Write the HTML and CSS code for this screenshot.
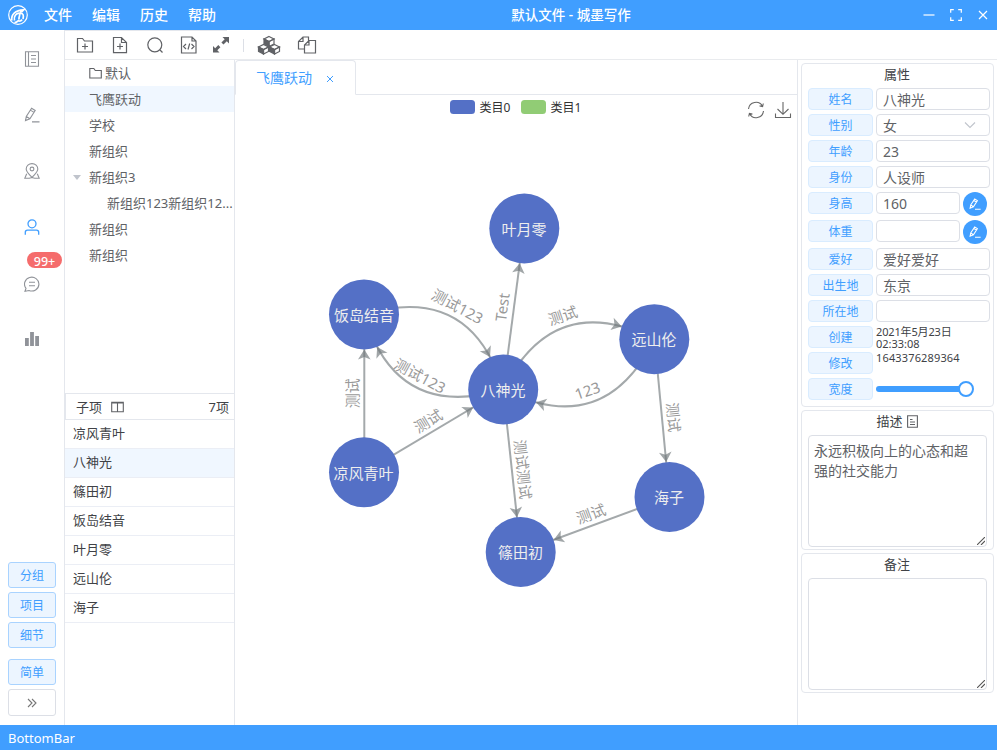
FILE: index.html
```html
<!DOCTYPE html>
<html lang="zh-CN">
<head>
<meta charset="utf-8">
<title>默认文件 - 城墨写作</title>
<link rel="stylesheet" href="styles.css">
</head>
<body>
<svg class="defs" width="0" height="0">
  <symbol id="pen" viewBox="0 0 16 16"><path d="M1.500 13.600 2.300 9.400 7.600 1.200 11.200 3.500 5.900 11.700ZM2.300 9.400l3.600 2.300M6.400 3.100l3.600 2.300M8 14.900h7.500"/></symbol>
  <symbol id="grip" viewBox="0 0 8 8"><path d="M0 8 8 0M4 8l4-4"/></symbol>
</svg>
<div class="app">
  <header class="titlebar">
    <svg class="logo" viewBox="0 0 20 20"><circle cx="10" cy="10" r="9.300"/><path class="wing" d="M3.800 15.500C3 9.500 7 5.300 15.800 4.800C14.500 6.500 13.500 7 12 7.200"/><path class="wing" d="M6.500 15.500C5.500 11 8 8.200 11.500 8.200C12.800 9.300 10.600 11 11 14.500M12 8.200C15.500 8.200 15.800 10.500 15 14M6.500 17.200C9 18 10 15 11 15.800S13.500 15.500 14 14.500"/></svg>
    <nav class="menu"><span>文件</span><span>编辑</span><span>历史</span><span>帮助</span></nav>
    <div class="title">默认文件 - 城墨写作</div>
    <div class="win">
      <svg viewBox="0 0 12 12"><path d="M.5 6h11"/></svg>
      <svg viewBox="0 0 12 12"><path d="M.7 3.800V.7h3.100M8.200.7h3.100v3.100M11.300 8.200v3.100H8.200M3.800 11.300H.7V8.200"/></svg>
      <svg viewBox="0 0 12 12"><path d="m2 2 8 8M10 2l-8 8"/></svg>
    </div>
  </header>

  <div class="body">
    <aside class="rail">
      <div class="rail-icons">
        <div class="rail-item"><svg viewBox="0 0 16 16"><path d="M1.500.8h13v14.400h-13zM4.500.8v14.400M7 4.500h5M7 8h5M7 11.500h5"/></svg></div>
        <div class="rail-item"><svg><use href="#pen"/></svg></div>
        <div class="rail-item"><svg viewBox="0 0 16 16"><path d="M8 14.500C5 11 2.200 9 2.200 6.100a5.800 5.500 0 0 1 11.600 0C13.800 9 11 11 8 14.500ZM2.700 10.700.8 15.300h4.500L8 14.500l2.700.8h4.500l-1.900-4.600"/><circle cx="8" cy="6" r="1.900"/></svg></div>
        <div class="rail-item active"><svg viewBox="0 0 16 16"><circle cx="8" cy="4.800" r="4"/><path d="M1.300 15.800v-2.500q0-2.200 2.200-2.200h9q2.200 0 2.200 2.200v2.500"/></svg></div>
        <div class="rail-item low"><svg viewBox="0 0 16 16"><path d="M1 15.200 2 12.300A7.200 6.900 0 1 1 5 14.500ZM5 6.200h6M5 9.800h6"/></svg><b class="badge">99+</b></div>
        <div class="rail-item"><svg class="solid" viewBox="0 0 16 16"><path d="M1 7h3.800v8H1zM6.100 1h3.800v14H6.100zM11.200 5H15v10h-3.800z"/></svg></div>
      </div>
      <div class="rail-buttons">
        <button>分组</button><button>项目</button><button>细节</button>
        <button class="gap">简单</button>
        <button class="plain"><svg viewBox="0 0 10 10"><path d="m1 1 4 4-4 4M5 1l4 4-4 4"/></svg></button>
      </div>
    </aside>

    <div class="main">
      <div class="toolbar">
        <svg viewBox="0 0 18 18"><path d="M1.500 2.500h5l2 2.500h8v11h-15zM9 7.500v6M6 10.500h6"/></svg>
        <svg viewBox="0 0 18 18"><path d="M2.500 1.500h8l5 5v10.200h-13zM10.500 1.500v5h5M9 7.500v6M6 10.500h6"/></svg>
        <svg viewBox="0 0 18 18"><circle cx="8.800" cy="8.800" r="7"/><path d="m14 14 2.500 2.500"/></svg>
        <svg class="code" viewBox="0 0 18 18"><path d="M1.500 1h10.500l4 4v12h-14.500zM12 1v4h4M6 8l-2.500 2.500L6 13M11.500 8l2.500 2.500L11.500 13M9.700 7.500 8 13.500"/></svg>
        <svg class="solid" viewBox="0 0 18 18"><path d="M10.500 1h6.500v6.500l-2.200-2.200-3.300 3.300-2.100-2.100 3.300-3.300zM1 16.500V10l2.200 2.200 3.100-3.100 2.100 2.100-3.100 3.100 2.200 2.200z"/></svg>
        <i class="sep"></i>
        <svg class="cubes" viewBox="0 0 24 20"><path class="top" d="m12 1.500 5 2.500-5 2.500L7 4zM6.500 9.500l5 2.500-5 2.500-5-2.500zM17.500 9.500l5 2.500-5 2.500-5-2.500z"/><path class="fill" d="M7 4v5l5 2.500v-5zM1.500 12v4.500l5 2.500v-4.500zM12.500 12v4.500l5 2.500v-4.500z"/><path class="top" d="M17 4v5l-5 2.500v-5zM11.500 12v4.500l-5 2.500v-4.500zM22.500 12v4.500l-5 2.500v-4.500z"/></svg>
        <svg class="copy" viewBox="0 0 20 18"><path d="M7.500 13h-6V5.500L6 1h5.500v3.500M6 1v4.500H1.500M12 4.500h6.500V17h-11V9zM12 4.500V9H7.500"/></svg>
      </div>

      <div class="columns">
        <section class="side">
          <div class="tree">
            <div class="node"><i class="caret none"></i><svg class="folder" viewBox="0 0 13 12"><path d="M.8 1.500h4l1.500 2h6v7.500H.8z"/></svg>默认</div>
            <div class="node on"><i class="caret none"></i>飞鹰跃动</div>
            <div class="node"><i class="caret none"></i>学校</div>
            <div class="node"><i class="caret none"></i>新组织</div>
            <div class="node"><i class="caret"></i>新组织3</div>
            <div class="node child">新组织123新组织12...</div>
            <div class="node"><i class="caret none"></i>新组织</div>
            <div class="node"><i class="caret none"></i>新组织</div>
          </div>
          <div class="subhead"><span>子项</span><svg viewBox="0 0 13 12"><path d="M.7 1.200h11.600v9.600H.7zM6.500 1v10M.7 2h11.600"/></svg><span class="count">7项</span></div>
          <div class="list">
            <div>凉风青叶</div><div class="on">八神光</div><div>篠田初</div><div>饭岛结音</div><div>叶月零</div><div>远山伦</div><div>海子</div>
          </div>
        </section>

        <section class="center">
          <div class="tabs"><div class="tab">飞鹰跃动<svg viewBox="0 0 8 8"><path d="m1 1 6 6M7 1 1 7"/></svg></div></div>
          <div class="chart">
            <div class="legend"><i class="c0"></i><span>类目0</span><i class="c1"></i><span>类目1</span></div>
            <div class="chart-tools">
              <svg viewBox="0 0 18 18"><path d="M1.500 8A7.500 7.500 0 0 1 15.500 5.200M16.500 10A7.500 7.500 0 0 1 2.500 12.800M16.300 2.500 15.600 5.600 12.600 4.900M1.700 15.500 2.400 12.400 5.400 13.100"/></svg>
              <svg viewBox="0 0 18 18"><path d="M9 1v12M3.500 8 9 13.300 14.500 8M1.500 12.500v4h15v-4"/></svg>
            </div>
            <svg class="graph" viewBox="235 95 562 630">
              <defs><path id="arrow" d="M0 0-10 6.300-7.500 0-10-6.300Z"/></defs>
              <g class="edges">
                <path d="M364 314.400Q471.100 282.400 503.200 389.500"/>
                <path d="M503.200 389.500Q396.100 421.500 364 314.400"/>
                <path d="M503.200 389.500Q553.700 288.700 654.500 339.200"/>
                <path d="M654.500 339.200Q604 440 503.200 389.500"/>
                <path d="M503.200 389.500 524.300 228.500"/>
                <path d="M364.300 472.300V314.400"/>
                <path d="M364 472.300 503.200 389.500"/>
                <path d="M503.200 389.500 520.700 552"/>
                <path d="M654.500 339.200 669.500 497"/>
                <path d="M669.500 497 520.700 552"/>
              </g>
              <g class="arrows">
                <use href="#arrow" transform="translate(490 357) rotate(61.800)"/>
                <use href="#arrow" transform="translate(377.200 346.900) rotate(-118.200)"/>
                <use href="#arrow" transform="translate(621.700 326.400) rotate(15.100)"/>
                <use href="#arrow" transform="translate(536 402.300) rotate(195.100)"/>
                <use href="#arrow" transform="translate(519.700 263.200) rotate(-82.500)"/>
                <use href="#arrow" transform="translate(364.300 349.600) rotate(-90)"/>
                <use href="#arrow" transform="translate(473.100 407.400) rotate(-30.700)"/>
                <use href="#arrow" transform="translate(516.900 517.200) rotate(83.900)"/>
                <use href="#arrow" transform="translate(666.200 462.100) rotate(84.600)"/>
                <use href="#arrow" transform="translate(553.600 539.900) rotate(159.700)"/>
              </g>
              <g class="edge-labels">
                <text dy="5.500" transform="translate(457.500 306.500) rotate(28.300)">测试123</text>
                <text dy="5.500" transform="translate(420 376) rotate(28.300)">测试123</text>
                <text dy="5.500" transform="translate(562.700 315.700) rotate(-18.400)">测试</text>
                <text dy="5.500" transform="translate(587.500 390.700) rotate(-18.400)">123</text>
                <text dy="5.500" transform="translate(502.300 307.300) rotate(-82.500)">Test</text>
                <text dy="5.500" transform="translate(352.300 393.300) rotate(-90)">测试</text>
                <text dy="5.500" transform="translate(428.300 421) rotate(-30.700)">测试</text>
                <text dy="5.500" transform="translate(522.700 469.500) rotate(83.900)">测试测试</text>
                <text dy="5.500" transform="translate(673.300 417.300) rotate(84.600)">测试</text>
                <text dy="5.500" transform="translate(591 514) rotate(-20.300)">测试</text>
              </g>
              <g class="nodes">
                <circle cx="524.300" cy="228.500" r="35"/><circle cx="364" cy="314.400" r="35"/><circle cx="654.300" cy="339.200" r="35"/><circle cx="503.200" cy="389.500" r="35"/><circle cx="364" cy="472.300" r="35"/><circle cx="669.500" cy="497" r="35"/><circle cx="520.700" cy="552" r="35"/>
              </g>
              <g class="node-labels">
                <text x="524" y="235">叶月零</text><text x="364" y="321">饭岛结音</text><text x="654" y="345">远山伦</text><text x="503" y="396">八神光</text><text x="363.500" y="479">凉风青叶</text><text x="669" y="503">海子</text><text x="520.500" y="558">篠田初</text>
              </g>
            </svg>
          </div>
        </section>

        <aside class="props">
          <div class="card">
            <h3>属性</h3>
            <div class="row"><label>姓名</label><div class="input">八神光</div></div>
            <div class="row"><label>性别</label><div class="input select">女<svg viewBox="0 0 12 12"><path d="m1 3.500 5 5 5-5"/></svg></div></div>
            <div class="row"><label>年龄</label><div class="input">23</div></div>
            <div class="row"><label>身份</label><div class="input">人设师</div></div>
            <div class="row"><label>身高</label><div class="input short">160</div><span class="round"><svg><use href="#pen"/></svg></span></div>
            <div class="row"><label>体重</label><div class="input short"></div><span class="round"><svg><use href="#pen"/></svg></span></div>
            <div class="row"><label>爱好</label><div class="input">爱好爱好</div></div>
            <div class="row"><label>出生地</label><div class="input">东京</div></div>
            <div class="row"><label>所在地</label><div class="input"></div></div>
            <div class="row"><label>创建</label><div class="stamp"><div class="date">2021年5月23日</div><div>02:33:08</div></div></div>
            <div class="row"><label>修改</label><div class="stamp number">1643376289364</div></div>
            <div class="row"><label>宽度</label><div class="slider"><i></i></div></div>
          </div>
          <div class="card note">
            <h3>描述<svg viewBox="0 0 11 13"><path d="M.6.8h9.800v11.400H.6zM3 4.500h2.500M3 7h5M3 9.500h5"/></svg></h3>
            <div class="area">永远积极向上的心态和超强的社交能力<svg><use href="#grip"/></svg></div>
          </div>
          <div class="card note">
            <h3>备注</h3>
            <div class="area"><svg><use href="#grip"/></svg></div>
          </div>
        </aside>
      </div>
    </div>
  </div>
  <footer>BottomBar</footer>
</div>
</body>
</html>
```
FILE: styles.css
```css
* { box-sizing: border-box; }
body { margin: 0; font: 13px/20px "Noto Sans", "Noto Sans CJK SC", sans-serif; color: #606266; background: #fff; overflow: hidden; }
svg { fill: none; stroke: currentColor; stroke-width: 1.1; flex: none; }
.defs { position: absolute; }
.app { width: 997px; height: 750px; display: flex; flex-direction: column; }
.titlebar { height: 30px; background: #409eff; color: #fff; display: flex; align-items: center; position: relative; flex: none; padding: 0 8px; }
.logo { width: 20px; height: 20px; stroke-width: 1.2; margin-right: 16px; }
.logo .wing { stroke-width: 1.7; }
.menu { display: flex; gap: 20px; font-size: 14px; font-weight: 500; }
.menu span { width: 28px; white-space: nowrap; }
.title { position: absolute; left: 0; right: 0; text-align: center; font-size: 13.5px; font-weight: 500; padding-left: 145px; }
.win { margin-left: auto; display: flex; gap: 15px; }
.win svg { width: 12px; height: 12px; stroke-width: 1.2; }
.body { flex: 1; display: flex; min-height: 0; }
.rail { width: 65px; border-right: 1px solid #e4e7ed; display: flex; flex-direction: column; justify-content: space-between; }
.rail-icons { padding-top: 1px; }
.rail-item { height: 56px; display: flex; align-items: center; justify-content: center; color: #909399; position: relative; }
.rail-item svg { width: 16px; height: 16px; }
.rail-item.active { color: #409eff; }
.rail-item.low svg { margin-top: 2px; }
.rail-item.active svg { stroke-width: 1.300; }
.badge { position: absolute; left: 27px; top: -3px; width: 35px; height: 16px; border-radius: 8px; background: #f56c6c; color: #fff; font: 500 12.5px/19px "Noto Sans", sans-serif; text-align: center; }
svg.solid { fill: currentColor; stroke: none; }
.rail-buttons { padding: 0 8px 9px; display: flex; flex-direction: column; gap: 4px; }
.rail-buttons button { height: 26px; padding: 1px 0 0; font: 12px/24px "Noto Sans", "Noto Sans CJK SC", sans-serif; color: #409eff; background: #ecf5ff; border: 1px solid #a9d3ff; border-radius: 3px; }
.rail-buttons .gap { margin-top: 7px; }
.rail-buttons .plain { height: 27px; padding: 0; background: #fff; border-color: #dcdfe6; color: #777; display: flex; align-items: center; justify-content: center; }
.plain svg { width: 10px; height: 10px; }
.main { flex: 1; display: flex; flex-direction: column; min-width: 0; }
.toolbar { height: 30px; border-bottom: 1px solid #e9ebee; background: linear-gradient(#e4e7ed, #e4e7ed) 0 0 / 162px 1px no-repeat; display: flex; align-items: center; padding: 1px 0 0 11px; gap: 17px; }
.toolbar svg { width: 18px; height: 18px; stroke-width: 1.2; }
.toolbar .code { margin-left: -1px; }
.toolbar .solid { margin-left: -3px; }
.sep { width: 1px; height: 13px; background: #dcdfe6; margin: 0 -4px; }
.toolbar .cubes { width: 24px; height: 20px; }
.cubes .fill { fill: currentColor; }
.toolbar .copy { width: 20px; margin-left: -1px; }
.columns { flex: 1; display: flex; min-height: 0; }
.side { width: 170px; border-right: 1px solid #e4e7ed; display: flex; flex-direction: column; }
.tree { height: 333px; }
.node { height: 26px; line-height: 25px; display: flex; align-items: center; padding-left: 8px; white-space: nowrap; }
.node.on, .list .on { background: #f0f7ff; }
.node.child { padding-left: 42px; }
.caret { border: 4.500px solid transparent; border-top: 5px solid #c0c4cc; border-bottom: 0; margin-right: 8px; }
.caret.none { visibility: hidden; }
.folder { width: 13px; height: 12px; margin-right: 3px; }
.subhead { height: 27px; border: 1px solid #e4e7ed; border-right: 0; display: flex; align-items: center; padding: 0 5px 0 10px; color: #404246; }
.subhead svg { width: 13px; height: 12px; margin-left: 9px; color: #606266; }
.count { margin-left: auto; }
.list div { height: 29px; line-height: 27px; border-bottom: 1px solid #ebeef5; padding-left: 8px; color: #404246; }
.center { flex: 1; display: flex; flex-direction: column; min-width: 0; }
.tabs { height: 35px; border-bottom: 1px solid #e4e7ed; display: flex; flex: none; }
.tab { width: 121px; height: 35px; border: 1px solid #e4e7ed; border-bottom-color: #fff; border-radius: 4px 4px 0 0; color: #409eff; font-size: 14px; display: flex; align-items: center; padding-left: 20px; }
.tab svg { width: 8px; height: 8px; margin-left: 14px; margin-top: 2px; stroke-width: 1; }
.chart { flex: 1; position: relative; }
.graph { display: block; width: 562px; height: 630px; }
.legend { position: absolute; left: 215px; top: 5px; display: flex; align-items: center; height: 14px; font-size: 12px; line-height: 22px; color: #333; }
.legend i { width: 25px; height: 14px; border-radius: 3.5px; margin-right: 4.5px; }
.legend span { margin-right: 10.5px; padding-top: 1px; }
.c0 { background: #5470c6; }
.c1 { background: #91cc75; }
.chart-tools { position: absolute; right: 5px; top: 6px; display: flex; gap: 9px; color: #666; }
.chart-tools svg { width: 18px; height: 18px; }
.edges { stroke: #a4a9ab; stroke-width: 2; }
.arrows { fill: #6e7679; fill-opacity: .65; stroke: none; }
.graph text { font-size: 15px; text-anchor: middle; stroke: none; }
.edge-labels { fill: #999; }
.nodes { fill: #5470c6; stroke: none; }
.node-labels { fill: #eee; }
.props { width: 200px; border-left: 1px solid #e4e7ed; padding: 3px 3px 0; display: flex; flex-direction: column; gap: 3px; }
.card { border: 1px solid #e4e7ed; border-radius: 4px; height: 344px; padding: 0 3px 0 6px; }
.card h3 { margin: 0; height: 24px; font: inherit; line-height: 20px; color: #404246; display: flex; justify-content: center; align-items: flex-start; padding-right: 4px; }
.card h3 svg { width: 11px; height: 13px; margin: 4px 0 0 4px; color: #606266; }
.row { display: flex; gap: 3px; margin-bottom: 4px; min-height: 22px; }
.row label { width: 65px; height: 22px; line-height: 21px; text-align: center; font-size: 12px; color: #409eff; background: #ecf5ff; border: 1px solid #d9ecff; border-radius: 4px; }
.input { width: 114px; height: 22px; border: 1px solid #dcdfe6; border-radius: 4px; padding: 0 6px; font-size: 14px; line-height: 22px; }
.short { width: 84px; }
.select { display: flex; justify-content: space-between; }
.select svg { width: 12px; height: 12px; margin: 4px 7px 0 0; color: #c0c4cc; }
.round { width: 24px; height: 24px; border-radius: 50%; background: #409eff; color: #fff; display: grid; place-items: center; }
.round svg { width: 12px; height: 12px; stroke-width: 1.400; }
.stamp { font-size: 11px; line-height: 12px; height: 22px; color: #404246; white-space: nowrap; }
.date { letter-spacing: -.15px; }
.number { letter-spacing: .15px; }
.slider { width: 90px; height: 6px; border-radius: 3px; background: #409eff; margin-top: 8px; position: relative; }
.slider i { position: absolute; right: -8px; top: -5px; width: 16px; height: 16px; border-radius: 50%; border: 2px solid #409eff; background: #fff; }
.card.note { height: 140px; }
.area { width: 179px; height: 112px; border: 1px solid #dcdfe6; border-radius: 4px; padding: 5px; font-size: 14px; line-height: 20px; position: relative; word-break: break-all; }
.area svg { position: absolute; right: 1px; bottom: 1px; width: 8px; height: 8px; color: #555; }
footer { height: 25px; background: #409eff; color: #fff; line-height: 26px; padding-left: 8px; flex: none; }
```
